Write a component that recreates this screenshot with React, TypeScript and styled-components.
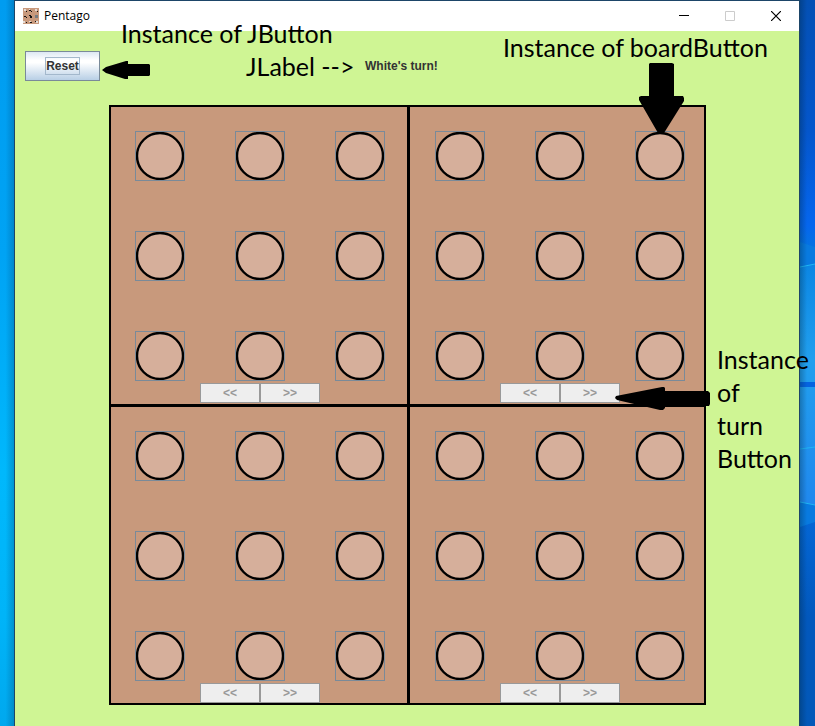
import React from "react";
import styled, { createGlobalStyle } from "styled-components";

const GlobalStyle = createGlobalStyle`
  *, *::before, *::after { box-sizing: border-box; }
  html, body { margin: 0; padding: 0; }
  body { overflow: hidden; }
  button { margin: 0; padding: 0; font: inherit; }
`;

const Desktop = styled.div`
  position: relative;
  min-height: 100vh;
  display: grid;
  grid-template-columns: 14px 1fr 15px;
  font-family: "Liberation Sans", Arial, sans-serif;
`;

const LeftWallpaper = styled.div`
  background:
    linear-gradient(90deg, transparent 40%, rgba(0, 60, 100, 0.28)),
    linear-gradient(180deg, #009cf0 0%, #00a3f4 35%, #00b8fc 65%, #00b4f8 85%, #00a8ee 100%);
`;

const RightWallpaper = styled.div`
  overflow: hidden;
  background: #0257bd;
  svg { display: block; }
`;

const Window = styled.main`
  display: flex;
  flex-direction: column;
  border: 1px solid #1d4568;
  border-bottom: 0;
  background: #cff594;
`;

const TitleBar = styled.header`
  display: flex;
  align-items: center;
  height: 30px;
  padding-left: 8px;
  background: #fff;
`;

const Title = styled.h1`
  flex: 1;
  margin: 0 0 0 5px;
  font: 400 12px/30px "Open Sans", sans-serif;
  color: #000;
`;

const WindowControl = styled.button`
  display: grid;
  place-items: center;
  width: 46px;
  height: 30px;
  border: 0;
  background: transparent;
`;

const Toolbar = styled.div`
  display: flex;
  align-items: center;
  gap: 265px;
  padding: 20px 10px 24px;
`;

const ResetButton = styled.button`
  display: flex;
  align-items: center;
  justify-content: center;
  width: 75px;
  height: 30px;
  border: 1px solid #7a8a99;
  background: linear-gradient(180deg, #dde8f3 0%, #fff 30%, #fff 38%, #b8cfe5 100%);
  color: #333;
  span {
    border: 1px solid #a3b8cc;
    font: 700 12px/16px "Liberation Sans", Arial, sans-serif;
  }
`;

const TurnLabel = styled.output`
  font: 700 12px/16px "Liberation Sans", Arial, sans-serif;
  color: #333;
`;

const BoardArea = styled.section`
  display: flex;
  justify-content: center;
  padding: 0 0 21px 1px;
`;

const Board = styled.div`
  display: grid;
  grid-template-columns: repeat(2, auto);
`;

const Quadrant = styled.section<{ $top: boolean; $left: boolean }>`
  display: flex;
  flex-direction: column;
  align-items: center;
  border: 0 solid #000;
  border-top-width: ${(p) => (p.$top ? 2 : 0)}px;
  border-left-width: ${(p) => (p.$left ? 2 : 0)}px;
  border-right-width: ${(p) => (p.$left ? 3 : 2)}px;
  border-bottom-width: ${(p) => (p.$top ? 3 : 2)}px;
  padding: 24px ${(p) => (p.$left ? 22 : 19)}px ${(p) => (p.$top ? 1 : 0)}px ${(p) => (p.$left ? 24 : 25)}px;
  background: #c8997c;
`;

const Holes = styled.div`
  display: grid;
  grid-template-columns: repeat(3, 50px);
  grid-auto-rows: 50px;
  gap: 50px;
`;

const BoardButton = styled.button`
  border: 1px solid #7a8a99;
  background: #c8997c;
  svg { display: block; }
`;

const TurnRow = styled.div`
  display: flex;
  margin-top: 2px;
`;

const TurnButton = styled.button`
  width: 60px;
  height: 20px;
  border: 1px solid #999;
  background: #eee;
  color: #999;
  font: 700 12px/18px "Liberation Sans", Arial, sans-serif;
`;

const Note = styled.p<{ $x: number; $y: number; $w?: number }>`
  position: absolute;
  left: ${(p) => p.$x}px;
  top: ${(p) => p.$y}px;
  width: ${(p) => (p.$w ? `${p.$w}px` : "max-content")};
  margin: 0;
  font: 400 25px/33px Lato, sans-serif;
  color: #000;
  pointer-events: none;
`;

const Arrow = styled.svg<{ $x: number; $y: number }>`
  position: absolute;
  left: ${(p) => p.$x}px;
  top: ${(p) => p.$y}px;
  pointer-events: none;
`;

const quadrants = [
  { name: "Top left", top: true, left: true },
  { name: "Top right", top: true, left: false },
  { name: "Bottom left", top: false, left: true },
  { name: "Bottom right", top: false, left: false },
];
const holes = Array.from({ length: 9 }, (_, i) => i + 1);

function AppIcon() {
  return (
    <svg width="16" height="16" viewBox="0 0 16 16" shapeRendering="crispEdges" aria-hidden="true">
      <path fill="#c8997c" d="M0 0h16v16H0z" />
      <path fill="#e4dcd6" d="M1 1h2v2H1zM6 1h1v1H6zM12 1h2v2h-2zM0 13h2v2H0zM6 13h2v1H6zM13 13h2v2h-2z" />
      <path fill="#111" d="M6 2h2v1H6zM8 3h1v1H8zM3 3h1v1H3zM14 3h1v1h-1zM1 8h2v1H1zM3 9h1v1H3zM6 7h2v1H6zM7 8h2v2H7zM3 14h1v1H3zM7 14h2v1H7zM12 13h1v1h-1z" />
      <path fill="#777b80" d="M12 7h3v3h-3z" />
    </svg>
  );
}

function BoardQuadrant({ name, top, left }: { name: string; top: boolean; left: boolean }) {
  return (
    <Quadrant $top={top} $left={left} aria-label={name}>
      <Holes>
        {holes.map((n) => (
          <BoardButton key={n} type="button" aria-label={`${name} ${n}`}>
            <svg width="48" height="48" viewBox="0 0 48 48" aria-hidden="true">
              <circle cx="24" cy="24" r="23" fill="#d6af9b" stroke="#000" strokeWidth="2.4" />
            </svg>
          </BoardButton>
        ))}
      </Holes>
      <TurnRow>
        <TurnButton type="button">&lt;&lt;</TurnButton>
        <TurnButton type="button">&gt;&gt;</TurnButton>
      </TurnRow>
    </Quadrant>
  );
}

export default function App() {
  return (
    <>
      <GlobalStyle />
      <Desktop>
        <LeftWallpaper />
        <Window>
          <TitleBar>
            <AppIcon />
            <Title>Pentago</Title>
            <WindowControl type="button" aria-label="Minimize">
              <svg width="10" height="10" aria-hidden="true"><path d="M0 4.5h10" stroke="#000" /></svg>
            </WindowControl>
            <WindowControl type="button" aria-label="Maximize" disabled>
              <svg width="10" height="10" aria-hidden="true"><path d="M.5.5h9v9h-9z" fill="none" stroke="#ccc" /></svg>
            </WindowControl>
            <WindowControl type="button" aria-label="Close">
              <svg width="10" height="10" aria-hidden="true"><path d="M0 0l10 10M10 0L0 10" stroke="#000" strokeWidth="1.2" /></svg>
            </WindowControl>
          </TitleBar>
          <Toolbar>
            <ResetButton type="button"><span>Reset</span></ResetButton>
            <TurnLabel>White's turn!</TurnLabel>
          </Toolbar>
          <BoardArea>
            <Board>
              {quadrants.map((q) => <BoardQuadrant key={q.name} {...q} />)}
            </Board>
          </BoardArea>
        </Window>
        <RightWallpaper>
          <svg width="15" height="726" viewBox="0 0 15 726" aria-hidden="true">
            <defs>
              <linearGradient id="sky" x1="0" y1="0" x2="0" y2="1">
                <stop offset="0" stopColor="#0450b4" />
                <stop offset=".18" stopColor="#0456cc" />
                <stop offset=".31" stopColor="#0566ee" />
                <stop offset=".34" stopColor="#0472e2" />
                <stop offset=".7" stopColor="#0468d8" />
                <stop offset=".85" stopColor="#0258bd" />
                <stop offset="1" stopColor="#0258b8" />
              </linearGradient>
              <linearGradient id="pane" x1="0" y1="0" x2="0" y2="1">
                <stop offset="0" stopColor="#0b86e4" />
                <stop offset=".4" stopColor="#219fee" />
                <stop offset="1" stopColor="#2088ee" />
              </linearGradient>
              <linearGradient id="edge">
                <stop offset="0" stopColor="#023" stopOpacity=".3" />
                <stop offset="1" stopColor="#023" stopOpacity="0" />
              </linearGradient>
            </defs>
            <path fill="url(#sky)" d="M0 0h15v726H0z" />
            <path fill="#087ae0" d="M0 242l15 5v275l-15 5z" />
            <path fill="url(#pane)" d="M0 267l15-3v118H0zM0 387h15v118l-15-3z" />
            <path stroke="#20b4f4" d="M0 267l15-3M0 449l15-2M0 502l15 3" />
            <path fill="#0563e0" d="M0 382h15v5H0z" />
            <path fill="url(#edge)" d="M0 0h7v726H0z" />
          </svg>
        </RightWallpaper>
        <Note $x={121} $y={17}>Instance of JButton</Note>
        <Note $x={246} $y={50}>JLabel --&gt;</Note>
        <Note $x={503} $y={31}>Instance of boardButton</Note>
        <Note $x={717} $y={343} $w={92}>Instance<br />of<br />turn<br />Button</Note>
        <Arrow $x={102} $y={60} width="48" height="20" aria-hidden="true">
          <path d="M0 10L4 7 24 1h2v3h21l1 1v10l-1 1H26v3h-3L4 13z" />
        </Arrow>
        <Arrow $x={639} $y={62} width="46" height="72" aria-hidden="true">
          <path d="M11 1h22l2 1v32h9l1 2v3L25 71h-6L0 38v-3l2-1h8V2z" />
        </Arrow>
        <Arrow $x={615} $y={386} width="96" height="25" aria-hidden="true">
          <path d="M1 10L47 1h2l1 1v3h43l2 2v11l-1 2H50v2l-2 2h-3L2 14 0 12z" />
        </Arrow>
      </Desktop>
    </>
  );
}
